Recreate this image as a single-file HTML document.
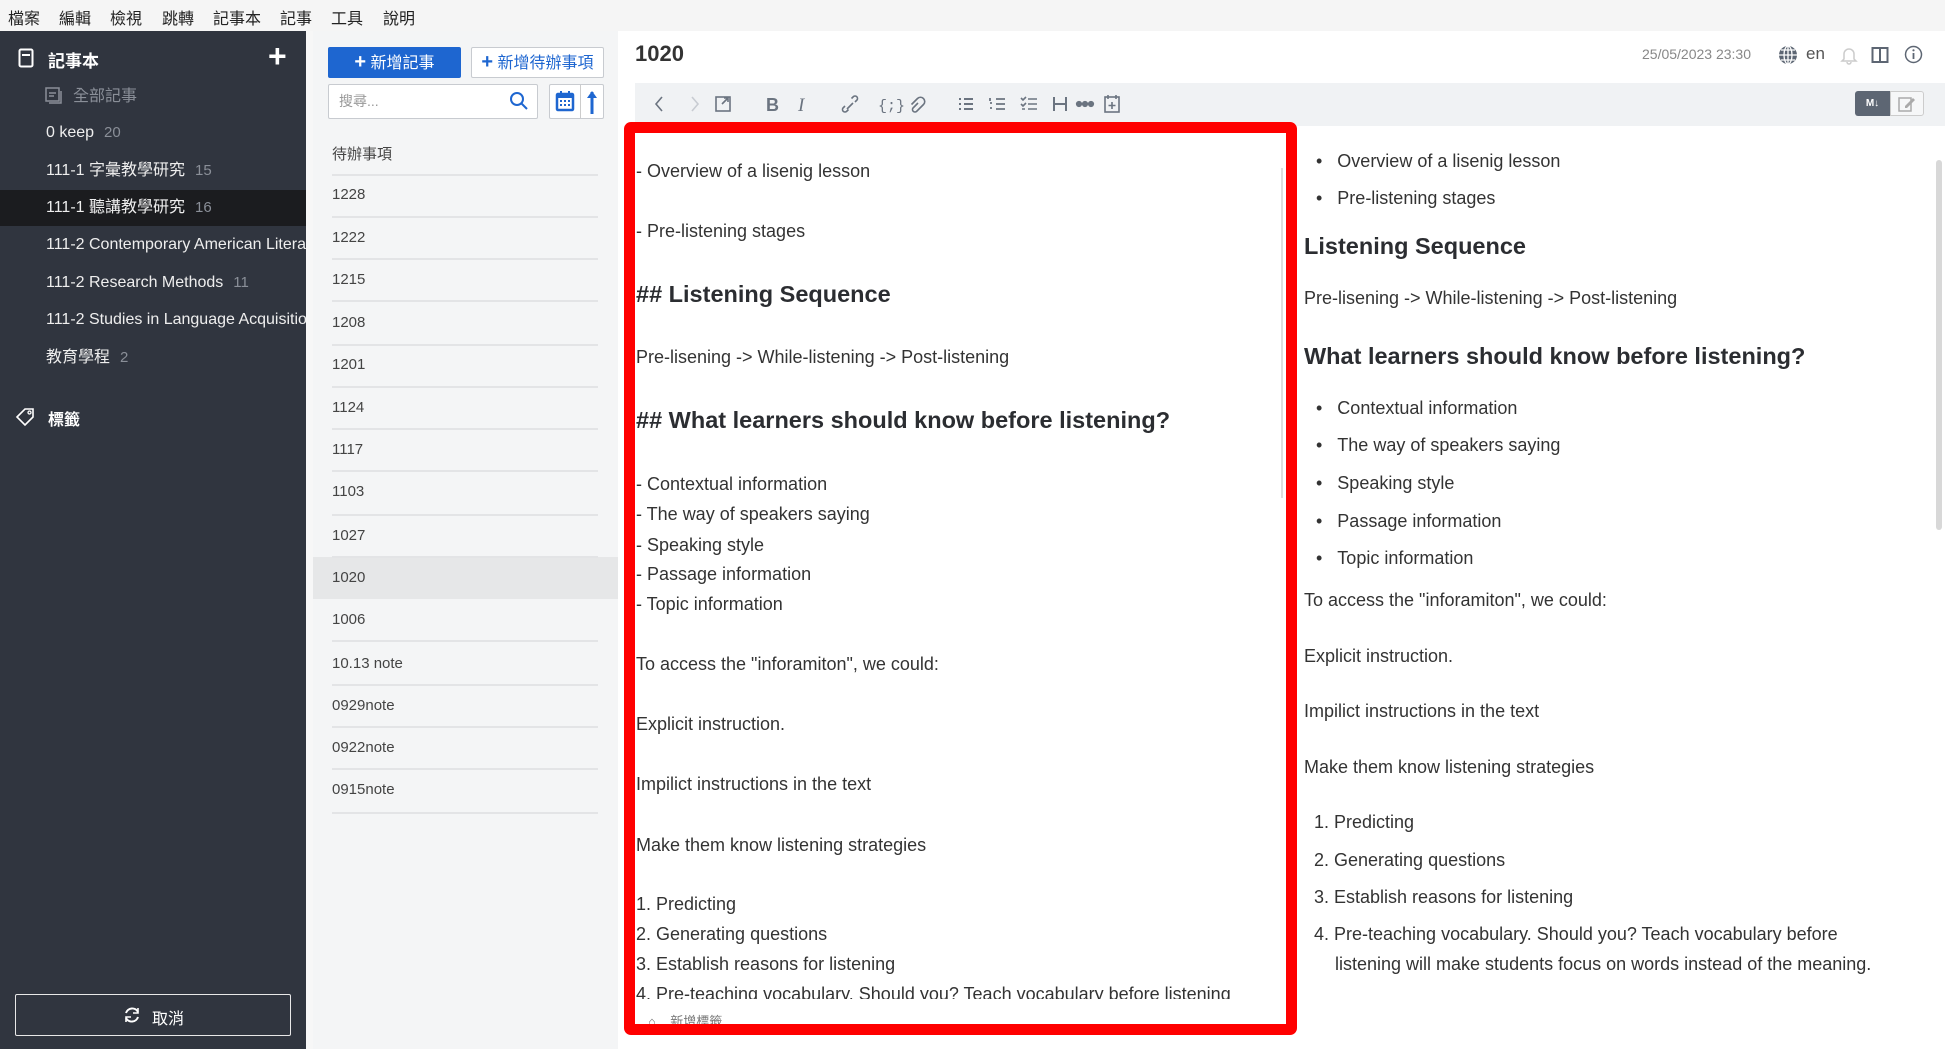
<!DOCTYPE html>
<html><head><meta charset="utf-8"><style>
*{margin:0;padding:0;box-sizing:border-box}
body{width:1945px;height:1049px;overflow:hidden;background:#fff;font-family:"Liberation Sans","Noto Sans CJK TC",sans-serif;position:relative;color:#333}
.a{position:absolute;white-space:nowrap}
.t{position:absolute;white-space:nowrap;line-height:24px;font-size:18px;color:#333}
.h{position:absolute;white-space:nowrap;line-height:30px;font-size:23.5px;font-weight:bold;color:#2b2d31}
.menu{top:0;left:0;width:1945px;height:31px;background:#f5f5f5}
.menu span{position:absolute;top:5px;font-size:16px;color:#222}
.side{top:31px;left:0;width:306px;height:1018px;background:#30353f}
.si{position:absolute;left:46px;color:#eee;font-size:16px;line-height:22px;white-space:nowrap}
.si b{font-weight:normal;color:#8a8f98;margin-left:10px;font-size:15px}
.list{top:31px;left:313px;width:305px;height:1018px;background:#f4f5f6}
.row{position:absolute;left:332px;width:266px;font-size:15px;color:#444;line-height:20px}
.sep{position:absolute;left:332px;width:266px;height:2px;background:#e3e4e6}
</style></head><body>
<div class="a menu">
<span style="left:8px">檔案</span><span style="left:59px">編輯</span><span style="left:110px">檢視</span><span style="left:162px">跳轉</span><span style="left:213px">記事本</span><span style="left:280px">記事</span><span style="left:331px">工具</span><span style="left:383px">說明</span>
</div>
<div class="a" style="top:31px;left:306px;width:7px;height:1018px;background:#f7f7f7"></div>
<div class="a side"></div>
<svg class="a" style="left:18px;top:48px" width="16" height="20" viewBox="0 0 16 20"><rect x="1.5" y="1.5" width="13" height="17" rx="1.5" fill="none" stroke="#fff" stroke-width="2"/><rect x="4" y="6" width="8" height="2" fill="#fff"/></svg>
<div class="a" style="left:48px;top:47px;color:#fff;font-size:17px;font-weight:bold">記事本</div>
<div class="a" style="left:268px;top:36px;color:#fff;font-size:32px;font-weight:bold;line-height:40px">+</div>
<svg class="a" style="left:45px;top:87px" width="18" height="18" viewBox="0 0 18 18"><rect x="1" y="1" width="13" height="13" fill="none" stroke="#8a8f98" stroke-width="1.5"/><path d="M4 6h7M4 9h5M16 4v12H4" fill="none" stroke="#8a8f98" stroke-width="1.5"/></svg>
<div class="si" style="left:73px;top:86px;color:#8a8f98">全部記事</div>
<div class="si" style="top:122px">0 keep<b>20</b></div>
<div class="si" style="top:160px">111-1 字彙教學研究<b>15</b></div>
<div class="a" style="left:0;top:190px;width:306px;height:36px;background:#1b1c1f"></div>
<div class="si" style="top:197px">111-1 聽講教學研究<b>16</b></div>
<div class="si" style="top:234px;width:260px;overflow:hidden">111-2 Contemporary American Literature</div>
<div class="si" style="top:272px">111-2 Research Methods<b>11</b></div>
<div class="si" style="top:309px;width:260px;overflow:hidden">111-2 Studies in Language Acquisition</div>
<div class="si" style="top:347px">教育學程<b>2</b></div>
<svg class="a" style="left:15px;top:407px" width="22" height="20" viewBox="0 0 22 20"><path d="M2 10L10 2h8v8l-8 8z" fill="none" stroke="#fff" stroke-width="1.6"/><circle cx="14.5" cy="5.5" r="1.5" fill="none" stroke="#fff" stroke-width="1.3"/></svg>
<div class="a" style="left:48px;top:406px;color:#fff;font-size:16px;font-weight:bold">標籤</div>
<div class="a" style="left:15px;top:994px;width:276px;height:42px;border:1.5px solid #e8e8e8;border-radius:2px"></div>
<svg class="a" style="left:122px;top:1005px" width="20" height="20" viewBox="0 0 20 20"><path d="M4 8a6.5 6.5 0 0 1 12-1M16 12a6.5 6.5 0 0 1-12 1" fill="none" stroke="#fff" stroke-width="2"/><path d="M16 3v5h-5M4 17v-5h5" fill="none" stroke="#fff" stroke-width="1.6"/></svg>
<div class="a" style="left:152px;top:1005px;color:#fff;font-size:16px">取消</div>

<div class="a list"></div>
<div class="a" style="left:328px;top:47px;width:133px;height:31px;background:#1e66d0;border-radius:2px;color:#fff;font-size:16px;line-height:31px;text-align:center"><b style="font-size:20px">+</b> 新增記事</div>
<div class="a" style="left:471px;top:47px;width:133px;height:31px;background:#fff;border:1.5px solid #c8cbd0;border-radius:2px;color:#1e66d0;font-size:16px;line-height:28px;text-align:center"><b style="font-size:20px">+</b> 新增待辦事項</div>
<div class="a" style="left:328px;top:84px;width:210px;height:35px;background:#fff;border:1.5px solid #c8cbd0;border-radius:2px;color:#999;font-size:14px;line-height:32px;padding-left:10px">搜尋...</div>
<svg class="a" style="left:509px;top:91px" width="20" height="20" viewBox="0 0 20 20"><circle cx="8" cy="8" r="6" fill="none" stroke="#1e66d0" stroke-width="2"/><path d="M12.5 12.5L18 18" stroke="#1e66d0" stroke-width="2"/></svg>
<div class="a" style="left:549px;top:84px;width:55px;height:35px;background:#fff;border:1.5px solid #c8cbd0;border-radius:2px"></div>
<div class="a" style="left:580px;top:85px;width:1px;height:33px;background:#ccc"></div>
<svg class="a" style="left:555px;top:90px" width="20" height="22" viewBox="0 0 20 22"><rect x="2" y="4" width="16" height="16" rx="1" fill="none" stroke="#1e66d0" stroke-width="2.5"/><rect x="2" y="4" width="16" height="4" fill="#1e66d0"/><path d="M6 1v5M14 1v5" stroke="#1e66d0" stroke-width="2"/><path d="M5 11h2M9 11h2M13 11h2M5 15h2M9 15h2M13 15h2" stroke="#1e66d0" stroke-width="2"/></svg>
<svg class="a" style="left:586px;top:89px" width="12" height="26" viewBox="0 0 12 26"><path d="M6 3v22" stroke="#1e66d0" stroke-width="3"/><path d="M1 9L6 2l5 7z" fill="#1e66d0"/></svg>
<div class="row" style="top:145px">待辦事項</div><div class="sep" style="top:174px"></div>
<div class="a" style="left:313px;top:557px;width:305px;height:42px;background:#e6e7e8"></div>
<div class="row" style="top:185px">1228</div><div class="sep" style="top:216px"></div>
<div class="row" style="top:228px">1222</div><div class="sep" style="top:258px"></div>
<div class="row" style="top:270px">1215</div><div class="sep" style="top:300px"></div>
<div class="row" style="top:313px">1208</div><div class="sep" style="top:344px"></div>
<div class="row" style="top:355px">1201</div><div class="sep" style="top:386px"></div>
<div class="row" style="top:398px">1124</div><div class="sep" style="top:428px"></div>
<div class="row" style="top:440px">1117</div><div class="sep" style="top:470px"></div>
<div class="row" style="top:482px">1103</div><div class="sep" style="top:514px"></div>
<div class="row" style="top:526px">1027</div><div class="sep" style="top:556px"></div>
<div class="row" style="top:568px">1020</div>
<div class="row" style="top:610px">1006</div><div class="sep" style="top:640px"></div>
<div class="row" style="top:654px">10.13 note</div><div class="sep" style="top:684px"></div>
<div class="row" style="top:696px">0929note</div><div class="sep" style="top:726px"></div>
<div class="row" style="top:738px">0922note</div><div class="sep" style="top:768px"></div>
<div class="row" style="top:780px">0915note</div><div class="sep" style="top:812px"></div>

<div class="a" style="left:635px;top:41px;font-size:22px;font-weight:bold;color:#333">1020</div>
<div class="a" style="left:1642px;top:46px;font-size:14px;color:#888">25/05/2023 23:30</div>
<svg class="a" style="left:1778px;top:45px" width="20" height="20" viewBox="0 0 20 20"><circle cx="10" cy="10" r="9" fill="#5d6673"/><path d="M1 10h18M10 1v18M3 5h14M3 15h14" stroke="#fff" stroke-width="1.3"/><ellipse cx="10" cy="10" rx="4" ry="9" fill="none" stroke="#fff" stroke-width="1.3"/></svg>
<div class="a" style="left:1806px;top:44px;font-size:17px;color:#555">en</div>
<svg class="a" style="left:1840px;top:45px" width="18" height="20" viewBox="0 0 18 20"><path d="M4 14V9a5 5 0 0 1 10 0v5l2 2H2z M7 17a2 2 0 0 0 4 0" fill="none" stroke="#ccc" stroke-width="1.5"/></svg>
<svg class="a" style="left:1871px;top:46px" width="18" height="18" viewBox="0 0 18 18"><rect x="1.5" y="2" width="15" height="14" fill="none" stroke="#5d6673" stroke-width="2"/><path d="M9 2v14" stroke="#5d6673" stroke-width="2"/></svg>
<svg class="a" style="left:1904px;top:45px" width="19" height="19" viewBox="0 0 19 19"><circle cx="9.5" cy="9.5" r="8" fill="none" stroke="#5d6673" stroke-width="1.5"/><path d="M9.5 8v6" stroke="#5d6673" stroke-width="1.8"/><circle cx="9.5" cy="5.3" r="1.1" fill="#5d6673"/></svg>

<div class="a" style="left:635px;top:83px;width:1310px;height:43px;background:#f0f2f4"></div>
<svg class="a" style="left:650px;top:92px" width="520" height="24" viewBox="0 0 520 24" fill="none" stroke="#6b7480" stroke-width="1.6">
<path d="M12 5l-6 7 6 7"/>
<path d="M42 5l6 7-6 7" stroke="#c8ccd2"/>
<rect x="66" y="5" width="14" height="14"/><path d="M72 12l6-6M74 6h4v4"/>
<text x="116" y="19" font-family="Liberation Sans" font-weight="bold" font-size="18" fill="#6b7480" stroke="none">B</text>
<text x="148" y="19" font-family="Liberation Serif" font-style="italic" font-size="19" fill="#6b7480" stroke="none">I</text>
<path d="M197 17l6-6M195 14l-2 2a2.5 2.5 0 0 0 3.5 3.5l2-2M205 10l2-2a2.5 2.5 0 0 0-3.5-3.5l-2 2"/>
<text x="228" y="18" font-family="Liberation Mono" font-size="15" fill="#6b7480" stroke="none">{;}</text>
<path d="M268 11l-5 5a2.5 2.5 0 0 0 3.5 3.5l7-7a4 4 0 0 0-6-6l-6 6"/>
<path d="M309 7h2M309 12h2M309 17h2M314 7h9M314 12h9M314 17h9" stroke-width="2"/>
<path d="M340 6v3M340 11h2M340 16h2M346 7h9M346 12h9M346 17h9" stroke-width="1.8"/>
<path d="M371 6l2 2 3-3M371 12l2 2 3-3M372 17h3M378 7h9M378 12h9M378 17h9" stroke-width="1.6"/>
<path d="M404 5v14M416 5v14M404 12h12" stroke-width="2"/>
<circle cx="429" cy="12" r="2.3" fill="#6b7480"/><circle cx="435" cy="12" r="2.3" fill="#6b7480"/><circle cx="441" cy="12" r="2.3" fill="#6b7480"/>
<rect x="455" y="5" width="14" height="15"/><path d="M458 3v4M466 3v4M462 10v7M458.5 13.5h7"/>
</svg>
<div class="a" style="left:1855px;top:91px;width:35px;height:25px;background:#5d6673;border-radius:3px 0 0 3px;color:#fff;font-size:10px;font-weight:bold;line-height:25px;text-align:center">M↓</div>
<div class="a" style="left:1890px;top:91px;width:34px;height:25px;border:1px solid #ccc;border-radius:0 3px 3px 0;background:#f6f7f8"></div>
<svg class="a" style="left:1897px;top:95px" width="20" height="18" viewBox="0 0 20 18"><rect x="2" y="3" width="12" height="13" fill="none" stroke="#aaa" stroke-width="1.5"/><path d="M8 11l8-8 2 2-8 8H8z" fill="#aaa"/></svg>

<!-- editor -->
<div class="t" style="left:636px;top:159px">- Overview of a lisenig lesson</div>
<div class="t" style="left:636px;top:219px">- Pre-listening stages</div>
<div class="h" style="left:636px;top:279px">## Listening Sequence</div>
<div class="t" style="left:636px;top:345px">Pre-lisening -&gt; While-listening -&gt; Post-listening</div>
<div class="h" style="left:636px;top:405px">## What learners should know before listening?</div>
<div class="t" style="left:636px;top:472px">- Contextual information</div>
<div class="t" style="left:636px;top:502px">- The way of speakers saying</div>
<div class="t" style="left:636px;top:533px">- Speaking style</div>
<div class="t" style="left:636px;top:562px">- Passage information</div>
<div class="t" style="left:636px;top:592px">- Topic information</div>
<div class="t" style="left:636px;top:652px">To access the "inforamiton", we could:</div>
<div class="t" style="left:636px;top:712px">Explicit instruction.</div>
<div class="t" style="left:636px;top:772px">Impilict instructions in the text</div>
<div class="t" style="left:636px;top:833px">Make them know listening strategies</div>
<div class="t" style="left:636px;top:892px">1. Predicting</div>
<div class="t" style="left:636px;top:922px">2. Generating questions</div>
<div class="t" style="left:636px;top:952px">3. Establish reasons for listening</div>
<div class="a" style="left:636px;top:982px;height:17px;overflow:hidden"><div class="t" style="position:relative">4. Pre-teaching vocabulary. Should you? Teach vocabulary before listening</div></div>
<div class="a" style="left:648px;top:1011px;font-size:13px;color:#777">⌂&nbsp;&nbsp;&nbsp;&nbsp;新增標籤</div>
<div class="a" style="left:1281px;top:168px;width:2px;height:330px;background:#ddd"></div>
<div class="a" style="left:624px;top:122px;width:673px;height:913px;border:11px solid #ff0000;border-radius:7px"></div>

<!-- preview -->
<div class="a" style="left:1936px;top:160px;width:6px;height:370px;background:#d8d8d8;border-radius:3px"></div>
<div class="t" style="left:1316px;top:149px">•&nbsp;&nbsp;&nbsp;Overview of a lisenig lesson</div>
<div class="t" style="left:1316px;top:186px">•&nbsp;&nbsp;&nbsp;Pre-listening stages</div>
<div class="h" style="left:1304px;top:231px">Listening Sequence</div>
<div class="t" style="left:1304px;top:286px">Pre-lisening -&gt; While-listening -&gt; Post-listening</div>
<div class="h" style="left:1304px;top:341px">What learners should know before listening?</div>
<div class="t" style="left:1316px;top:396px">•&nbsp;&nbsp;&nbsp;Contextual information</div>
<div class="t" style="left:1316px;top:433px">•&nbsp;&nbsp;&nbsp;The way of speakers saying</div>
<div class="t" style="left:1316px;top:471px">•&nbsp;&nbsp;&nbsp;Speaking style</div>
<div class="t" style="left:1316px;top:509px">•&nbsp;&nbsp;&nbsp;Passage information</div>
<div class="t" style="left:1316px;top:546px">•&nbsp;&nbsp;&nbsp;Topic information</div>
<div class="t" style="left:1304px;top:588px">To access the "inforamiton", we could:</div>
<div class="t" style="left:1304px;top:644px">Explicit instruction.</div>
<div class="t" style="left:1304px;top:699px">Impilict instructions in the text</div>
<div class="t" style="left:1304px;top:755px">Make them know listening strategies</div>
<div class="t" style="left:1314px;top:810px">1. Predicting</div>
<div class="t" style="left:1314px;top:848px">2. Generating questions</div>
<div class="t" style="left:1314px;top:885px">3. Establish reasons for listening</div>
<div class="t" style="left:1314px;top:922px">4. Pre-teaching vocabulary. Should you? Teach vocabulary before</div>
<div class="t" style="left:1335px;top:952px">listening will make students focus on words instead of the meaning.</div>
</body></html>
